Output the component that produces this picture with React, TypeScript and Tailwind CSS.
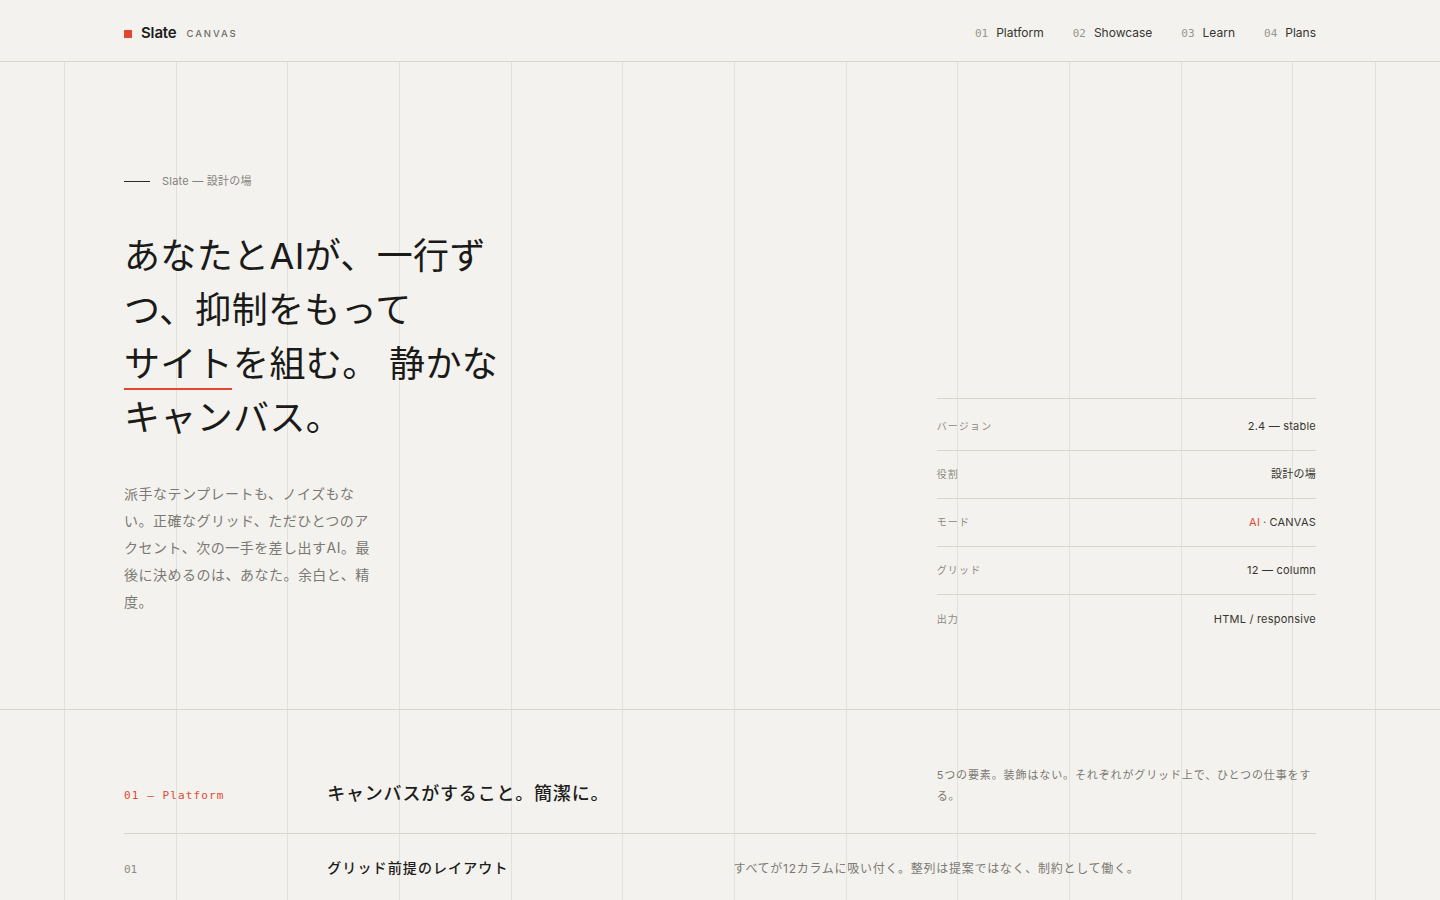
import React from "react";

const FONT = 'Inter, "Noto Sans CJK JP", "Noto Sans", sans-serif';
const MONO = '"DejaVu Sans Mono", "Liberation Mono", monospace';

const nav = [
  ["01", "Platform"],
  ["02", "Showcase"],
  ["03", "Learn"],
  ["04", "Plans"],
];

const specs: [string, React.ReactNode][] = [
  ["バージョン", "2.4 — stable"],
  ["役割", "設計の場"],
  [
    "モード",
    <span key="m">
      <span className="text-[#e4472f]">AI</span>
      <span className="mx-[3px] text-[#555]">·</span>CANVAS
    </span>,
  ],
  ["グリッド", "12 — column"],
  ["出力", "HTML / responsive"],
];

const items = [
  ["01", "グリッド前提のレイアウト", "すべてが12カラムに吸い付く。整列は提案ではなく、制約として働く。"],
  ["02", "一行ずつのAI提案", "AIは次の一手を差し出すだけ。採用するかどうかは、常にあなたが決める。"],
  ["03", "ただひとつのアクセント", "色はひとつだけ。視線を導くべき場所にだけ、静かに置かれる。"],
  ["04", "余白のタイポグラフィ", "文字と余白の比率を守る。読みやすさは装飾ではなく、精度から生まれる。"],
  ["05", "レスポンシブな出力", "書き出されるのは素直なHTML。どの画面でも、同じ秩序を保つ。"],
];

export default function App() {
  return (
    <div className="min-h-screen bg-[#f3f2ee] text-[#1d1d1b]" style={{ fontFamily: FONT }}>
      {/* Header */}
      <header className="h-[62px] border-b border-[#d9d6cb] flex items-center pt-[6px]">
        <div className="w-[1192px] mx-auto flex items-center justify-between">
          <div className="flex items-center">
            <span className="w-[8px] h-[8px] bg-[#e4472f] mr-[9px]" />
            <span className="text-[15px] font-semibold tracking-[-0.01em] text-[#1d1d1b]">Slate</span>
            <span className="ml-[10px] text-[9.5px] font-medium tracking-[0.2em] text-[#6e6c66] pt-[2px]">CANVAS</span>
          </div>
          <nav className="flex items-center gap-[29px]">
            {nav.map(([n, l]) => (
              <div key={n} className="flex items-baseline gap-[8px]">
                <span className="text-[11px] text-[#97958f]" style={{ fontFamily: MONO }}>
                  {n}
                </span>
                <span className="text-[12px] text-[#37352f]">{l}</span>
              </div>
            ))}
          </nav>
        </div>
      </header>

      <div className="relative">
        {/* vertical grid overlay */}
        <div className="pointer-events-none absolute top-0 bottom-0 left-[64px] w-[1312px] border-r border-[#e3e1da] flex overflow-hidden">
          {Array.from({ length: 12 }).map((_, i) => (
            <div key={i} className="shrink-0 w-[111.67px] h-full border-l border-[#e3e1da]" />
          ))}
        </div>

        {/* Hero */}
        <section className="relative h-[648px] border-b border-[#d7d5cc]">
          <div className="w-[1192px] h-full mx-auto grid grid-cols-12 gap-x-[27px] pt-[111px] pb-[66px]">
            <div className="col-span-4 self-start">
              <div className="flex items-center h-4">
                <span className="w-[26px] h-px bg-[#2a2a28]" />
                <span className="ml-[12px] text-[11px] tracking-[0.02em] text-[#85837d]">Slate — 設計の場</span>
              </div>
              <h1 className="mt-10 text-[36px] leading-[54px] font-normal tracking-[0.01em] text-[#1a1a18] whitespace-nowrap">
                あなたとAIが、一行ず
                <br />
                つ、抑制をもって
                <br />
                <span className="relative inline-block">
                  サイト
                  <span className="absolute left-0 right-[1px] bottom-[1px] h-[2px] bg-[#e4472f]" />
                </span>
                を組む。 静かな
                <br />
                キャンバス。
              </h1>
              <p className="mt-[35px] text-[14px] leading-[27px] tracking-[0.035em] text-[#7b7973] whitespace-nowrap">
                派手なテンプレートも、ノイズもな
                <br />
                い。正確なグリッド、ただひとつのア
                <br />
                クセント、次の一手を差し出すAI。最
                <br />
                後に決めるのは、あなた。余白と、精
                <br />
                度。
              </p>
            </div>

            <div className="col-start-9 col-span-4 self-end border-t border-[#d7d5cc]">
              {specs.map(([k, v], i) => (
                <div
                  key={k}
                  className={`flex items-center justify-between ${i === 0 ? "h-[52px] pt-1" : "h-12"} ${
                    i < specs.length - 1 ? "border-b border-[#d7d5cc]" : ""
                  }`}
                >
                  <span className="text-[10px] tracking-[0.12em] text-[#8d8b85]">{k}</span>
                  <span className="text-[11px] tracking-[0.02em] text-[#37352f]">{v}</span>
                </div>
              ))}
            </div>
          </div>
        </section>

        {/* Platform section */}
        <section className="relative">
          <div className="w-[1192px] mx-auto pt-[55px]">
            <div className="grid grid-cols-12 gap-x-[27px] items-end pb-[26px]">
              <div
                className="col-span-2 text-[11px] leading-[16px] tracking-[0.1em] text-[#e4472f] pb-[3px]"
                style={{ fontFamily: MONO }}
              >
                01 — Platform
              </div>
              <h2 className="col-start-3 col-span-6 text-[18px] leading-[27px] font-medium tracking-[0.045em] text-[#1d1d1b]">
                キャンバスがすること。簡潔に。
              </h2>
              <p className="col-start-9 col-span-4 text-[11px] leading-[21px] tracking-[0.08em] text-[#7b7973] whitespace-nowrap">
                5つの要素。装飾はない。それぞれがグリッド上で、ひとつの仕事をす
                <br />
                る。
              </p>
            </div>

            <div>
              {items.map(([n, t, d]) => (
                <div key={n} className="grid grid-cols-12 gap-x-[27px] items-baseline border-t border-[#d7d5cc] pt-[23px] pb-[24px]">
                  <span className="col-span-2 text-[11px] text-[#8d8b85]" style={{ fontFamily: MONO }}>
                    {n}
                  </span>
                  <span className="col-start-3 col-span-4 text-[14px] leading-[21px] font-medium tracking-[0.08em] text-[#1d1d1b]">
                    {t}
                  </span>
                  <span className="col-start-7 col-span-6 text-[12px] leading-[21px] tracking-[0.06em] text-[#7b7973]">
                    {d}
                  </span>
                </div>
              ))}
            </div>
          </div>
        </section>
      </div>
    </div>
  );
}
